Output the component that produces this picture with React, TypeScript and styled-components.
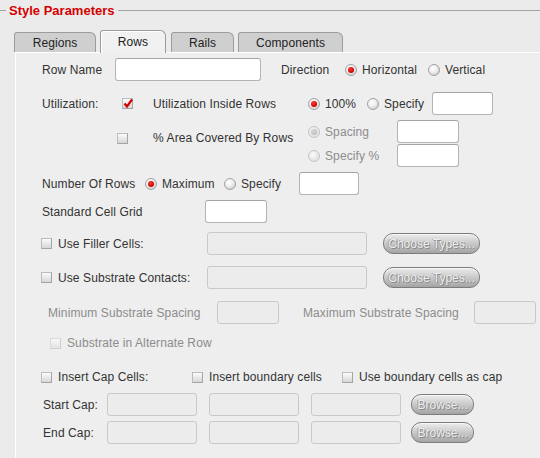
import React from "react";
import styled, { createGlobalStyle, css } from "styled-components";

const Global = createGlobalStyle`
  html, body { margin: 0; padding: 0; }
  body {
    background: #ebebeb;
    font-family: "Liberation Sans", Arial, Helvetica, sans-serif;
    font-size: 12px;
    color: #333333;
  }
`;

const Root = styled.div`
  width: 540px;
  height: 458px;
  overflow: hidden;
  display: flex;
  flex-direction: column;
  background: #ebebeb;
  letter-spacing: 0.1px;
`;

const Header = styled.div`
  display: flex;
  align-items: center;
  height: 21px;
`;

const HeaderLine = styled.div<{ $w?: number }>`
  height: 0;
  border-top: 1px solid #a3a3a3;
  ${(p) => (p.$w ? css`width: ${p.$w}px; flex: none;` : css`flex: 1;`)}
`;

const Title = styled.span`
  font-weight: bold;
  font-size: 13px;
  color: #d40000;
  padding: 0 3px;
  line-height: 16px;
  letter-spacing: 0;
`;

const TabBar = styled.div`
  display: flex;
  align-items: flex-end;
  height: 22px;
  margin-top: 9px;
  padding-left: 14px;
  position: relative;
  z-index: 1;
`;

const Tab = styled.div<{ $w: number; $active?: boolean; $ml: number }>`
  box-sizing: border-box;
  width: ${(p) => p.$w}px;
  margin-left: ${(p) => p.$ml}px;
  display: flex;
  align-items: center;
  justify-content: center;
  font-size: 12px;
  color: #222;
  border: 1px solid #9c9c9c;
  border-bottom: none;
  border-radius: 3px 6px 0 0;
  ${(p) =>
    p.$active
      ? css`
          height: 23px;
          margin-bottom: -1px;
          background: #f1f1f1;
          box-shadow: inset 1px 1px 0 #ffffff;
          padding-bottom: 1px;
        `
      : css`
          height: 20px;
          background: #cfcfcf;
          padding-top: 1px;
        `}
`;

const Panel = styled.div`
  flex: 1;
  margin-left: 15px;
  border-top: 1px solid #ffffff;
  border-left: 1px solid #ffffff;
  background: #eeeeee;
  padding-left: 26px;
  display: flex;
  flex-direction: column;
`;

const Row = styled.div<{ $mt: number; $h: number }>`
  display: flex;
  align-items: center;
  height: ${(p) => p.$h}px;
  margin-top: ${(p) => p.$mt}px;
  flex: none;
`;

const Label = styled.span<{ $w?: number; $ml?: number; $dis?: boolean }>`
  flex: none;
  white-space: nowrap;
  ${(p) => (p.$w ? css`width: ${p.$w}px;` : "")}
  margin-left: ${(p) => p.$ml ?? 0}px;
  color: ${(p) => (p.$dis ? "#8c8c8c" : "#333333")};
`;

const Field = styled.input<{ $w: number; $ml?: number }>`
  flex: none;
  box-sizing: border-box;
  width: ${(p) => p.$w}px;
  height: 23px;
  margin: 0 0 0 ${(p) => p.$ml ?? 0}px;
  padding: 0 3px;
  border: 1px solid #b4b4b4;
  border-top-color: #a4a4a4;
  border-radius: 3px;
  background: #ffffff;
  font: inherit;
  outline: none;
  &:disabled {
    background: #ececec;
    border-color: #c9c9c9;
  }
`;

const Button = styled.button<{ $w: number; $ml: number }>`
  flex: none;
  box-sizing: border-box;
  width: ${(p) => p.$w}px;
  height: 21px;
  margin-left: ${(p) => p.$ml}px;
  padding: 0;
  border: 1px solid #7c7c7c;
  border-radius: 10px;
  background: linear-gradient(#ececec 0%, #c9c9c9 50%, #a4a4a4 100%);
  box-shadow: inset 0 1px 0 #f8f8f8;
  font-family: "Liberation Sans", Arial, sans-serif;
  font-size: 12px;
  color: #ededed;
  text-shadow: 1px 1px 0 #8a8a8a, -1px 0 0 #a0a0a0;
`;

const Option = styled.label<{ $w?: number; $ml?: number; $gap?: number }>`
  flex: none;
  display: flex;
  align-items: center;
  gap: ${(p) => p.$gap ?? 5}px;
  ${(p) => (p.$w ? css`width: ${p.$w}px;` : "")}
  margin-left: ${(p) => p.$ml ?? 0}px;
  white-space: nowrap;
`;

const RadioDot = styled.span<{ $on?: boolean; $dis?: boolean }>`
  flex: none;
  box-sizing: border-box;
  width: 12px;
  height: 12px;
  border-radius: 50%;
  border: 1px solid ${(p) => (p.$dis ? "#c4c4c4" : "#a2a2a2")};
  background: ${(p) =>
    p.$dis
      ? "radial-gradient(circle at 40% 35%, #fbfbfb 0%, #dedede 80%)"
      : "radial-gradient(circle at 40% 35%, #ffffff 0%, #f0f0f0 40%, #c6c6c6 90%)"};
  display: flex;
  align-items: center;
  justify-content: center;
  &::after {
    content: "";
    display: ${(p) => (p.$on ? "block" : "none")};
    width: 6px;
    height: 6px;
    border-radius: 50%;
    background: ${(p) =>
      p.$dis
        ? "radial-gradient(circle at 40% 35%, #d8d8d8, #b2b2b2)"
        : "radial-gradient(circle at 40% 35%, #ff3a3a, #c80000 70%)"};
  }
`;

const Box = styled.span<{ $dis?: boolean }>`
  flex: none;
  position: relative;
  box-sizing: border-box;
  width: 11px;
  height: 11px;
  border: 1px solid ${(p) => (p.$dis ? "#cfcfcf" : "#a4a4a4")};
  border-top-color: ${(p) => (p.$dis ? "#dadada" : "#bcbcbc")};
  border-left-color: ${(p) => (p.$dis ? "#dadada" : "#bcbcbc")};
  background: ${(p) =>
    p.$dis ? "linear-gradient(#f6f6f6, #e4e4e4)" : "linear-gradient(#fbfbfb, #d6d6d6)"};
`;

const CheckMark = styled.svg`
  position: absolute;
  left: -1px;
  top: -2px;
`;

const Check: React.FC<{ on?: boolean; dis?: boolean }> = ({ on, dis }) => (
  <Box $dis={dis}>
    {on && (
      <CheckMark width="12" height="12" viewBox="0 0 12 12">
        <path d="M2.5 6.5 L5 9.5 L10 2.5" fill="none" stroke="#d00000" strokeWidth="2.2" />
      </CheckMark>
    )}
  </Box>
);

const Radio: React.FC<{
  text: string;
  on?: boolean;
  dis?: boolean;
  w?: number;
  ml?: number;
}> = ({ text, on, dis, w, ml }) => (
  <Option $w={w} $ml={ml}>
    <RadioDot $on={on} $dis={dis} />
    <Label $dis={dis}>{text}</Label>
  </Option>
);

const CheckOpt: React.FC<{
  text: string;
  on?: boolean;
  dis?: boolean;
  w?: number;
  ml?: number;
}> = ({ text, on, dis, w, ml }) => (
  <Option $w={w} $ml={ml} $gap={6}>
    <Check on={on} dis={dis} />
    <Label $dis={dis}>{text}</Label>
  </Option>
);

const AreaBlock = styled.div`
  display: flex;
  align-items: center;
  align-self: flex-start;
  margin-top: 11px;
  margin-left: 75px;
  height: 14px;
`;

const SubCol = styled.div`
  display: flex;
  flex-direction: column;
  gap: 1px;
`;

const SubRow = styled.div`
  display: flex;
  align-items: center;
  height: 23px;
`;

export default function App() {
  return (
    <Root>
      <Global />
      <Header>
        <HeaderLine $w={6} />
        <Title>Style Parameters</Title>
        <HeaderLine />
      </Header>
      <TabBar>
        <Tab $w={82} $ml={0}>Regions</Tab>
        <Tab $w={66} $ml={4} $active>Rows</Tab>
        <Tab $w={63} $ml={5}>Rails</Tab>
        <Tab $w={105} $ml={4}>Components</Tab>
      </TabBar>
      <Panel>
        <Row $mt={5} $h={23}>
          <Label $w={73}>Row Name</Label>
          <Field $w={146} />
          <Label $w={64} $ml={20}>Direction</Label>
          <Radio text="Horizontal" on w={83} />
          <Radio text="Vertical" />
        </Row>

        <Row $mt={11} $h={23}>
          <Label $w={80}>Utilization:</Label>
          <Check on />
          <Label $w={155} $ml={20}>Utilization Inside Rows</Label>
          <Radio text="100%" on w={59} />
          <Radio text="Specify" w={65} />
          <Field $w={61} />
        </Row>

        <Row $mt={5} $h={47}>
          <AreaBlock>
            <Check />
            <Label $w={155} $ml={25}>% Area Covered By Rows</Label>
          </AreaBlock>
          <SubCol>
            <SubRow>
              <Radio text="Spacing" on dis w={89} />
              <Field $w={62} />
            </SubRow>
            <SubRow>
              <Radio text="Specify %" dis w={89} />
              <Field $w={62} />
            </SubRow>
          </SubCol>
        </Row>

        <Row $mt={5} $h={23}>
          <Label $w={103}>Number Of Rows</Label>
          <Radio text="Maximum" on w={79} />
          <Radio text="Specify" w={75} />
          <Field $w={60} />
        </Row>

        <Row $mt={5} $h={23}>
          <Label $w={163}>Standard Cell Grid</Label>
          <Field $w={62} />
        </Row>

        <Row $mt={9} $h={23}>
          <CheckOpt text="Use Filler Cells:" w={166} ml={-1} />
          <Field $w={160} disabled />
          <Button $w={97} $ml={16} disabled>Choose Types...</Button>
        </Row>

        <Row $mt={11} $h={23}>
          <CheckOpt text="Use Substrate Contacts:" w={166} ml={-1} />
          <Field $w={160} disabled />
          <Button $w={97} $ml={16} disabled>Choose Types...</Button>
        </Row>

        <Row $mt={12} $h={23}>
          <Label $w={169} $ml={6} $dis>Minimum Substrate Spacing</Label>
          <Field $w={62} disabled />
          <Label $w={171} $ml={24} $dis>Maximum Substrate Spacing</Label>
          <Field $w={62} disabled />
        </Row>

        <Row $mt={12} $h={14}>
          <CheckOpt text="Substrate in Alternate Row" dis ml={8} />
        </Row>

        <Row $mt={20} $h={14}>
          <CheckOpt text="Insert Cap Cells:" w={151} ml={-1} />
          <CheckOpt text="Insert boundary cells" w={150} />
          <CheckOpt text="Use boundary cells as cap" />
        </Row>

        <Row $mt={9} $h={23}>
          <Label $w={64} $ml={1}>Start Cap:</Label>
          <Field $w={90} disabled />
          <Field $w={90} $ml={12} disabled />
          <Field $w={90} $ml={12} disabled />
          <Button $w={63} $ml={10} disabled>Browse...</Button>
        </Row>

        <Row $mt={5} $h={23}>
          <Label $w={64} $ml={1}>End Cap:</Label>
          <Field $w={90} disabled />
          <Field $w={90} $ml={12} disabled />
          <Field $w={90} $ml={12} disabled />
          <Button $w={63} $ml={10} disabled>Browse...</Button>
        </Row>
      </Panel>
    </Root>
  );
}
